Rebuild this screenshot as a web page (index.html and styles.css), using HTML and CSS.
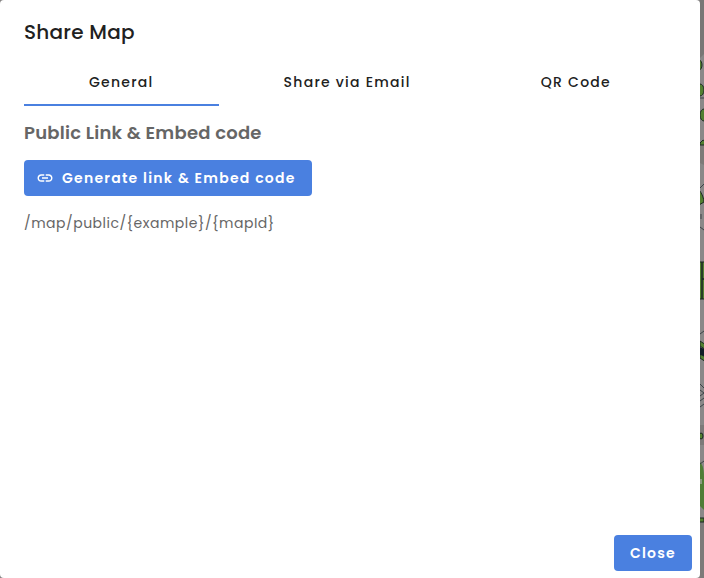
FILE: index.html
```html
<!DOCTYPE html>
<html lang="en">
<head>
    <meta charset="UTF-8">
    <meta name="viewport" content="width=device-width, initial-scale=1">
    <title>Share Map</title>
    <link rel="stylesheet" href="styles.css">
</head>
<body>
    <!-- Map behind the dialog -->
    <svg class="map" width="4" height="578" viewBox="0 0 4 578" aria-hidden="true">
        <rect width="4" height="578" fill="#8a8888"/>
        <path d="M0 0h4v54l-4 4z" fill="#797675"/>
        <path d="M0 145h4v20l-4-2z" fill="#7e7a78"/>
        <path d="M0 425h4v20H0zM0 522h4v56H0z" fill="#7d7a79"/>
        <g fill="#527f31" stroke="#1d2924">
            <ellipse cx="-1" cy="65" rx="3" ry="5"/>
            <ellipse cx="0" cy="90" rx="4" ry="6"/>
            <ellipse cx="4" cy="115" rx="4" ry="6"/>
            <path d="M0 143l3-3 3 2v3H0zM-1 190c3 3 5 9 5 12l-5 3zM-1 262h3v37h-3zM2 262h3v17H2zM2 279h3v20H2zM0 341l6 4v5l-6-4zM0 353l6 5v4l-6-4z"/>
            <ellipse cx="1" cy="436" rx="2" ry="3"/>
            <path d="M-1 518h5v4h-5z"/>
        </g>
        <path d="M0 462c3 3 4 8 4 16v32l-4-4z" fill="#4f7d36"/>
        <path d="M0 479h2v5H0z" fill="#8a9a80"/>
        <path d="M0 347l4 2v7l-4-1z" fill="#111d26"/>
        <path d="M0 98h4M0 188l4-4M1 214v5M0 227l4 3M0 334l4-3M0 384l4 4M0 390l4 3M0 396l4-3M0 401l4-3M0 407l4-3M0 464l4-3" fill="none" stroke="#3c4347"/>
    </svg>

    <main class="dialog" role="dialog" aria-labelledby="dialogTitle">
        <h1 id="dialogTitle">Share Map</h1>

        <div class="tabs" role="tablist">
            <button type="button" class="tab active" role="tab" aria-selected="true" aria-controls="generalPanel">General</button>
            <button type="button" class="tab" role="tab" aria-selected="false">Share via Email</button>
            <button type="button" class="tab" role="tab" aria-selected="false">QR Code</button>
        </div>

        <section class="panel" id="generalPanel" role="tabpanel">
            <h2>Public Link &amp; Embed code</h2>
            <button type="button" class="btn btn-link">
                <svg width="18" height="18" viewBox="0 0 24 24" fill="currentColor" aria-hidden="true">
                    <path d="M3.9 12c0-1.71 1.39-3.1 3.1-3.1h4V7H7c-2.76 0-5 2.24-5 5s2.24 5 5 5h4v-1.9H7c-1.71 0-3.1-1.39-3.1-3.1zM8 13h8v-2H8v2zm9-6h-4v1.9h4c1.71 0 3.1 1.39 3.1 3.1s-1.39 3.1-3.1 3.1h-4V17h4c2.76 0 5-2.24 5-5s-2.24-5-5-5z"/>
                </svg>
                Generate link &amp; Embed code
            </button>
            <p>/map/public/{example}/{mapId}</p>
        </section>

        <div class="actions">
            <button type="button" class="btn">Close</button>
        </div>
    </main>
</body>
</html>
```

FILE: styles.css
```css
body {
    font-family: 'Poppins', 'Inter', sans-serif;
    margin: 0;
    background-color: #858383;
}

.map {
    position: absolute;
    top: 0;
    right: 0;
    z-index: -1;
}

/* Dialog */
.dialog {
    display: flex;
    flex-direction: column;
    box-sizing: border-box;
    min-height: 100vh;
    margin-right: 4px;
    padding: 16px 24px 7px;
    border-radius: 4px;
    background-color: white;
}

h1 {
    margin: 0 0 10px;
    color: #212121;
    font-size: 20px;
    font-weight: 500;
    line-height: 32px;
    letter-spacing: 0.0125em;
}

button {
    font-family: inherit;
    font-size: 14px;
    letter-spacing: 0.0893em;
    border: none;
    cursor: pointer;
}

/* Tabs */
.tabs {
    display: flex;
}

.tab {
    flex: 1 1 auto;
    height: 48px;
    padding: 2px 24px 0;
    border-bottom: 2px solid transparent;
    background: none;
    color: #212121;
    font-weight: 500;
}

.tab.active {
    border-bottom-color: #4a80e0;
}

/* Panel */
.panel {
    flex: 1;
    padding-top: 12px;
    color: #666;
}

h2 {
    margin: 0 0 12px;
    font-size: 18px;
    font-weight: 600;
    line-height: 30px;
    letter-spacing: 0.0125em;
}

p {
    margin: 16px 0 0;
    font-size: 14px;
    line-height: 22px;
    letter-spacing: 0.0357em;
}

.btn {
    height: 36px;
    padding: 0 16px;
    border-radius: 4px;
    background-color: #4a80e0;
    color: white;
    font-weight: 600;
}

.btn-link {
    display: flex;
    align-items: center;
    gap: 8px;
    padding-left: 12px;
}

.actions {
    display: flex;
    justify-content: flex-end;
    margin-right: -16px;
}
```
